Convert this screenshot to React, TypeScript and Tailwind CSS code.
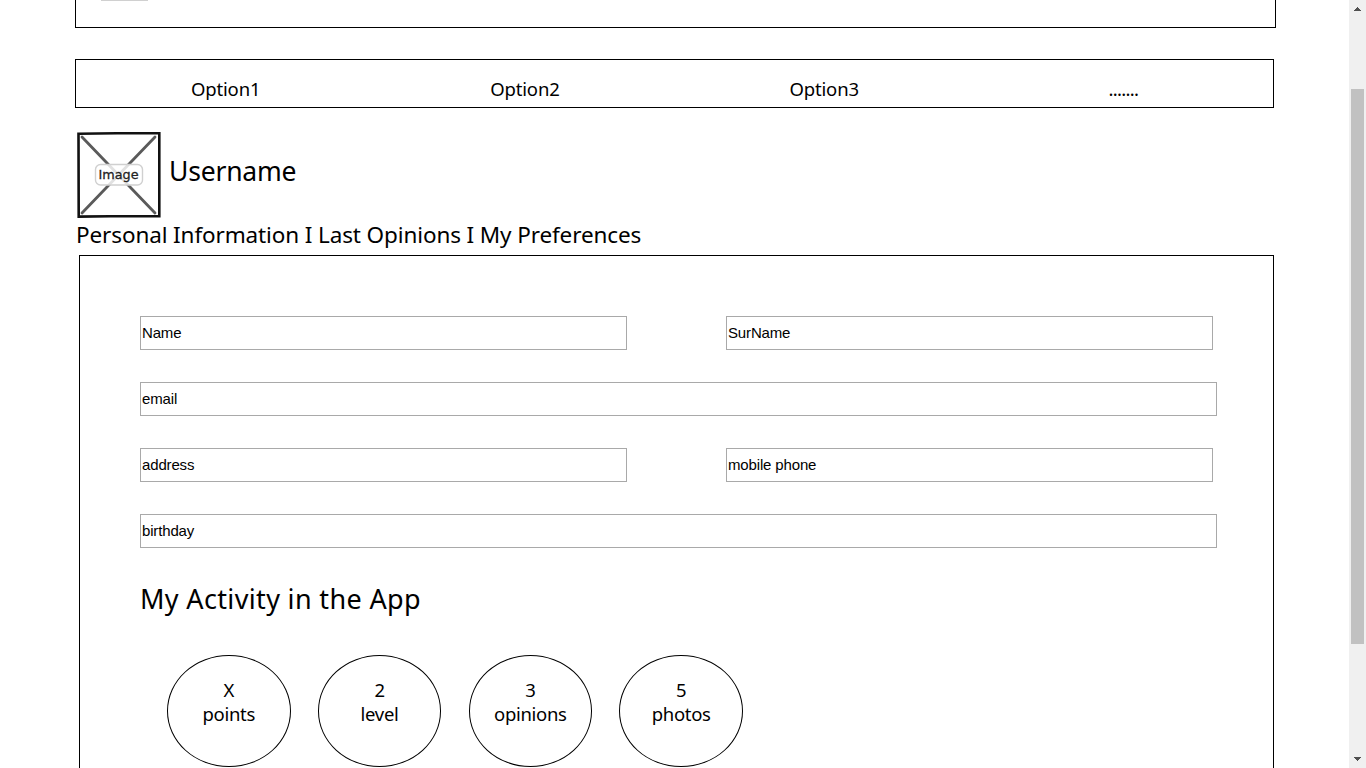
const options = [
  { label: "Option1", className: "tracking-[-0.15px]" },
  { label: "Option2", className: "tracking-[-0.15px]" },
  { label: "Option3", className: "tracking-[-0.15px]" },
  { label: ".......", className: "tracking-[-0.7px]" },
];

const stats = [
  { value: "X", label: "points" },
  { value: "2", label: "level" },
  { value: "3", label: "opinions" },
  { value: "5", label: "photos" },
];

function Field({ value, className }: { value: string; className: string }) {
  return (
    <input
      defaultValue={value}
      className={`block h-[34px] border border-[#a9a9a9] bg-white px-px pb-0.5 font-['Liberation_Sans',sans-serif] text-[15px] tracking-[-0.15px] text-black outline-none ${className}`}
    />
  );
}

function Placeholder() {
  return (
    <svg width="84" height="86" viewBox="0 0 84 86" className="block shrink-0">
      <path d="M1.5 1.8L40 1.3H82.3V84.2H34L1.7 84.6Z" fill="#fff" stroke="#111" strokeWidth="2.6" />
      <path d="M5 5L78 81M78 5L5 81" stroke="#5a5a5a" strokeWidth="2.8" strokeLinecap="round" />
      <rect x="18.5" y="32.5" width="47" height="20.5" rx="5" fill="#fff" fillOpacity="0.82" stroke="#d0d0d0" strokeWidth="1.4" />
      <text
        x="41.5"
        y="46.5"
        textAnchor="middle"
        textLength="40"
        lengthAdjust="spacingAndGlyphs"
        fontSize="13"
        fill="#222"
        stroke="#222"
        strokeWidth="0.3"
        fontFamily="'DejaVu Sans', sans-serif"
      >
        Image
      </text>
    </svg>
  );
}

function Scrollbar() {
  return (
    <div className="flex h-full w-[17px] shrink-0 flex-col items-center bg-[#f0f0f0]">
      <svg width="17" height="89" viewBox="0 0 17 89" shapeRendering="crispEdges" className="block shrink-0">
        <path d="M8 7h1v1h1v1h1v1h1v1H5v-1h1v-1h1v-1h1z" fill="#505050" />
      </svg>
      <div className="h-[555px] w-[13px] shrink-0 bg-[#c1c1c1]" />
      <svg width="17" height="124" viewBox="0 0 17 124" shapeRendering="crispEdges" className="block shrink-0">
        <path d="M5 113h7v1h-1v1h-1v1H9v1H8v-1H7v-1H6v-1H5z" fill="#505050" />
      </svg>
    </div>
  );
}

export default function App() {
  return (
    <div className="flex h-screen w-full overflow-hidden bg-white font-['Noto_Sans',sans-serif] text-black">
      <div className="flex min-w-0 flex-1 flex-col pl-[75px]">
        <header className="h-7 w-[1201px] shrink-0 border-x border-b border-black pl-[25px]">
          <div className="h-px w-[47px] bg-[#d0d0d0]" />
        </header>
        <nav className="mt-[31px] grid h-[49px] w-[1199px] shrink-0 grid-cols-4 border border-black pt-[15px] text-center text-[18.5px] leading-7">
          {options.map((o) => (
            <a key={o.label} className={o.className}>
              {o.label}
            </a>
          ))}
        </nav>
        <div className="mt-6 flex h-[86px] shrink-0 pl-0.5">
          <Placeholder />
          <h1 className="ml-2 mt-5 text-[26.5px] font-normal leading-[38px] tracking-[-0.2px]">Username</h1>
        </div>
        <div className="h-[37px] shrink-0 pl-px text-[22.5px] leading-[34px] tracking-[-0.12px]">
          Personal Information I Last Opinions I My Preferences
        </div>
        <main className="ml-1 h-[600px] w-[1195px] shrink-0 border border-b-0 border-black pl-[60px] pt-[60px]">
          <div className="flex flex-col gap-8">
            <div className="flex gap-[99px]">
              <Field value="Name" className="w-[487px]" />
              <Field value="SurName" className="w-[487px]" />
            </div>
            <Field value="email" className="w-[1077px]" />
            <div className="flex gap-[99px]">
              <Field value="address" className="w-[487px]" />
              <Field value="mobile phone" className="w-[487px]" />
            </div>
            <Field value="birthday" className="w-[1077px]" />
          </div>
          <h2 className="mt-[31px] text-[27px] font-normal leading-[40px] tracking-[0.35px]">My Activity in the App</h2>
          <div className="ml-[27px] mt-9 flex gap-[27.3px]">
            {stats.map((s) => (
              <div
                key={s.label}
                className="flex h-28 w-[123.5px] flex-col items-center rounded-[50%] border border-black pt-[22px] text-[18.5px] leading-6 tracking-[-0.3px]"
              >
                <span>{s.value}</span>
                <span>{s.label}</span>
              </div>
            ))}
          </div>
        </main>
      </div>
      <Scrollbar />
    </div>
  );
}
